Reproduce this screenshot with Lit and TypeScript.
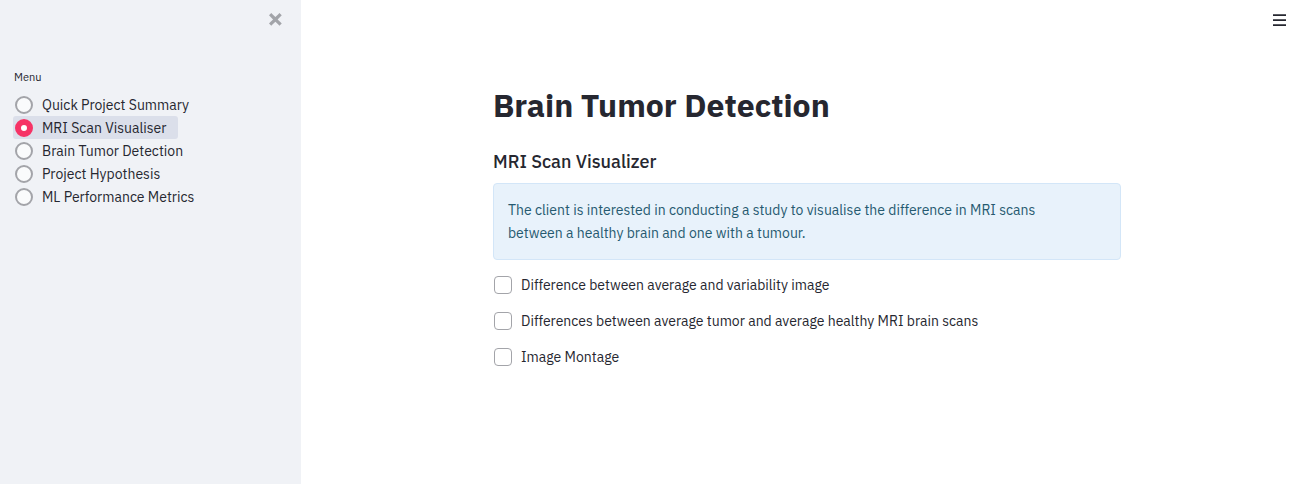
import { LitElement, html, css } from "lit";
import { customElement, state } from "lit/decorators.js";

const PAGES = [
  "Quick Project Summary",
  "MRI Scan Visualiser",
  "Brain Tumor Detection",
  "Project Hypothesis",
  "ML Performance Metrics",
];

const OPTIONS = [
  "Difference between average and variability image",
  "Differences between average tumor and average healthy MRI brain scans",
  "Image Montage",
];

@customElement("app-root")
export class AppRoot extends LitElement {
  @state() private page = PAGES[1];

  static styles = css`
    :host {
      display: flex;
      min-height: 100vh;
      font-family: "IBM Plex Sans", Roboto, "Liberation Sans", sans-serif;
      font-size: 14px;
      line-height: 23px;
      color: #262730;
      background: #fff;
    }
    * {
      box-sizing: border-box;
    }
    button {
      display: flex;
      padding: 0;
      border: 0;
      background: none;
      cursor: pointer;
    }
    .sidebar {
      flex: none;
      width: 301px;
      padding: 13px 13px 32px;
      background: #f0f2f6;
    }
    .close {
      margin: 0 6px 0 auto;
      color: #a2a4a9;
    }
    .menu {
      display: flex;
      flex-direction: column;
      align-items: flex-start;
      margin: 42px 0 0;
      padding: 0;
      border: 0;
    }
    .menu legend {
      padding: 0 1px;
      margin-bottom: 7px;
      font-size: 11px;
      line-height: 18px;
    }
    .item {
      display: flex;
      align-items: center;
      gap: 9px;
      height: 23px;
      padding: 0 12px 0 2px;
      border-radius: 3px;
      line-height: 24px;
      cursor: pointer;
    }
    .item:has(input:checked) {
      background: #dbdfea;
    }
    input {
      appearance: none;
      flex: none;
      width: 18px;
      height: 18px;
      margin: 0;
      cursor: pointer;
    }
    .item input {
      border: 2px solid #a3a4a9;
      border-radius: 50%;
      background: #fafbfc;
    }
    .item input:checked {
      border: 6px solid #f63366;
      background: #fff;
    }
    .main {
      flex: 1;
      min-width: 0;
      display: flex;
      flex-direction: column;
    }
    .toolbar {
      display: flex;
      justify-content: flex-end;
      padding: 14px 25px 0 0;
    }
    .content {
      width: 100%;
      max-width: 660px;
      margin: 0 auto;
      padding: 54px 15px 32px 17px;
    }
    h1 {
      margin: 0;
      font-size: 32px;
      font-weight: 700;
      line-height: 48px;
    }
    h2 {
      margin: 21px 0 9px;
      font-size: 18px;
      font-weight: 500;
      line-height: 24px;
    }
    .info {
      padding: 15px 14px 14px;
      border: 1px solid #d3e6f8;
      border-radius: 4px;
      background: #e8f2fb;
      color: #265a70;
    }
    .info p {
      margin: 0;
      max-width: 560px;
    }
    .checks {
      display: flex;
      flex-direction: column;
      align-items: flex-start;
      gap: 12px;
      margin-top: 13px;
      padding-left: 1px;
    }
    .check {
      display: flex;
      align-items: center;
      gap: 9px;
      line-height: 24px;
      cursor: pointer;
    }
    .check input {
      border: 1px solid #a3a4a9;
      border-radius: 4px;
      background: #fff;
    }
    .check input:checked {
      border-color: #f63366;
      background: #f63366;
    }
  `;

  render() {
    return html`
      <aside class="sidebar">
        <button class="close" aria-label="Close sidebar">
          <svg width="13" height="13" viewBox="0 0 8 8" fill="currentColor" aria-hidden="true">
            <path d="M1.41 0l-1.41 1.41.72.72 1.78 1.81-1.78 1.78-.72.69 1.41 1.44.72-.72 1.81-1.81 1.78 1.81.69.72 1.44-1.44-.72-.69-1.81-1.78 1.81-1.81.72-.72-1.44-1.41-.69.72-1.78 1.78-1.81-1.78-.72-.72z"></path>
          </svg>
        </button>
        <fieldset class="menu">
          <legend>Menu</legend>
          ${PAGES.map(
            (name) => html`<label class="item">
              <input
                type="radio"
                name="page"
                .value=${name}
                .checked=${name === this.page}
                @change=${() => (this.page = name)}
              />${name}</label>`
          )}
        </fieldset>
      </aside>
      <main class="main">
        <div class="toolbar">
          <button aria-label="Main menu">
            <svg width="13" height="13" viewBox="0 0 13 13" fill="#262730" aria-hidden="true">
              <path d="M0 .2h13v1.8H0zM0 5.2h13v1.8H0zM0 10.2h13v1.8H0z"></path>
            </svg>
          </button>
        </div>
        <div class="content">
          <h1>Brain Tumor Detection</h1>
          <h2>MRI Scan Visualizer</h2>
          <div class="info">
            <p>The client is interested in conducting a study to visualise the difference in MRI scans between a healthy brain and one with a tumour.</p>
          </div>
          <div class="checks">
            ${OPTIONS.map(
              (name) => html`<label class="check"><input type="checkbox" />${name}</label>`
            )}
          </div>
        </div>
      </main>
    `;
  }
}
